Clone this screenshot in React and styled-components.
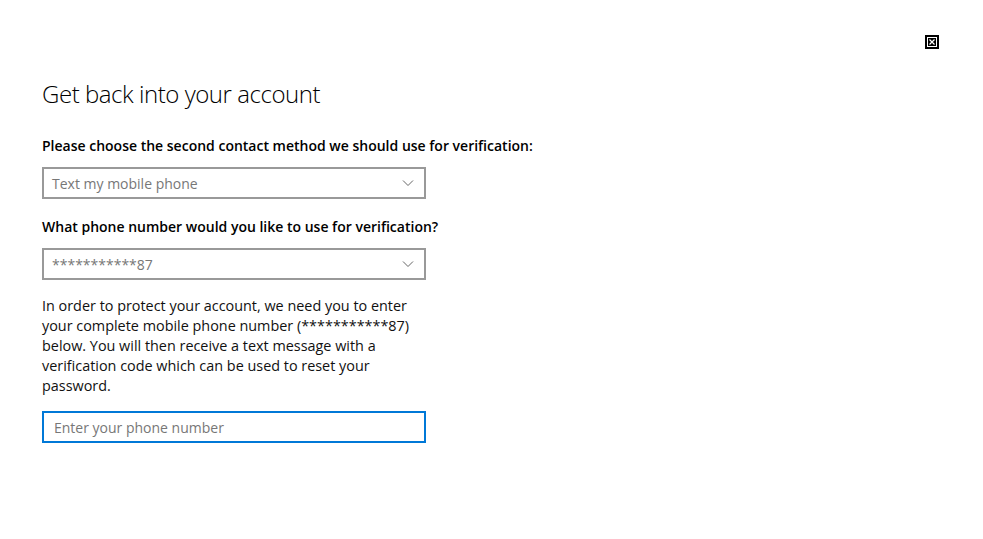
import React from "react";
import styled, { createGlobalStyle } from "styled-components";

const GlobalStyle = createGlobalStyle`
  html, body {
    margin: 0;
    padding: 0;
    background: #fff;
  }
  body {
    font-family: "Open Sans", "Noto Sans", sans-serif;
    color: #000;
  }
`;

const Page = styled.div`
  width: 983px;
  height: 539px;
  box-sizing: border-box;
  padding: 35px 44px 0 42px;
  display: flex;
  flex-direction: column;
`;

const TopBar = styled.div`
  display: flex;
  justify-content: flex-end;
  height: 14px;
`;

const CloseButton = styled.button`
  width: 14px;
  height: 14px;
  padding: 0;
  border: 0;
  background: none;
  cursor: pointer;
  display: block;
  svg {
    display: block;
  }
`;

const Title = styled.h1`
  margin: 29px 0 0;
  font-size: 24px;
  font-weight: 300;
  line-height: 32px;
  letter-spacing: -0.45px;
`;

const Form = styled.div`
  width: 384px;
  margin-top: 26px;
  display: flex;
  flex-direction: column;
`;

const Label = styled.div`
  font-size: 14px;
  font-weight: 600;
  line-height: 20px;
  white-space: nowrap;
  margin-top: ${(p) => p.$top || 0}px;
`;

const SelectBox = styled.div`
  margin-top: 11px;
  height: 32px;
  box-sizing: border-box;
  border: 2px solid #999;
  display: flex;
  align-items: center;
  justify-content: space-between;
  padding: 0 10px 0 8px;
  font-size: 14px;
  color: #777;
`;

const Text = styled.p`
  margin: 16px 0 0;
  font-size: 14.4px;
  line-height: 20px;
  color: #111;
`;

const Input = styled.input`
  margin-top: 15px;
  height: 32px;
  box-sizing: border-box;
  border: 2px solid #0078d7;
  outline: none;
  padding: 0 10px;
  font-family: inherit;
  font-size: 14px;
  color: #000;
  &::placeholder {
    color: #777;
  }
`;

const Chevron = () => (
  <svg width="12" height="8" viewBox="0 0 12 8">
    <path d="M1 1.5 L6 6.5 L11 1.5" fill="none" stroke="#666" strokeWidth="1" />
  </svg>
);

export default function App() {
  return (
    <>
      <GlobalStyle />
      <Page>
        <TopBar>
          <CloseButton aria-label="Close">
            <svg width="14" height="14" viewBox="0 0 14 14">
              <rect x="1" y="1" width="12" height="12" fill="#fff" stroke="#000" strokeWidth="2" />
              <rect x="3" y="3" width="8" height="8" fill="#000" />
              <path d="M4.5 4.5 L9.5 9.5 M9.5 4.5 L4.5 9.5" stroke="#fff" strokeWidth="1.2" />
            </svg>
          </CloseButton>
        </TopBar>
        <Title>Get back into your account</Title>
        <Form>
          <Label>Please choose the second contact method we should use for verification:</Label>
          <SelectBox>
            <span>Text my mobile phone</span>
            <Chevron />
          </SelectBox>
          <Label $top={18}>What phone number would you like to use for verification?</Label>
          <SelectBox>
            <span>***********87</span>
            <Chevron />
          </SelectBox>
          <Text>
            In order to protect your account, we need you to enter your complete mobile phone
            number (***********87) below. You will then receive a text message with a
            verification code which can be used to reset your password.
          </Text>
          <Input placeholder="Enter your phone number" />
        </Form>
      </Page>
    </>
  );
}
